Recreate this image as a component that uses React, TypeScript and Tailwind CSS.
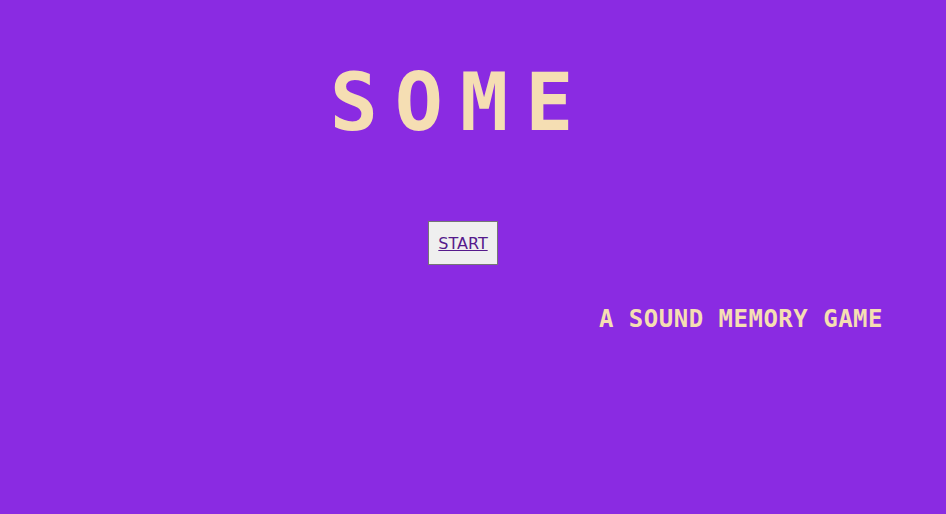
export default function App() {
  return (
    <div className="min-h-[514px] w-full bg-[#8a2be2] font-['DejaVu_Sans_Mono',monospace]">
      <div className="flex flex-col items-center pr-[20px] pt-[63px]">
        <h1 className="text-[80px] font-bold leading-[80px] tracking-[17px] pr-[6px] text-[#f5deb3]">SOME</h1>
        <a
          href="#"
          className="mt-[78px] flex h-[44px] w-[70px] items-center justify-center border border-[#767676] bg-[#efefef] pt-[2px] font-['DejaVu_Sans',sans-serif] text-[16px] text-[#551a8b] underline"
        >
          START
        </a>
      </div>
      <div className="flex justify-end pr-[63px] pt-[40px]">
        <p className="text-[24px] font-bold leading-[28px] tracking-[0.5px] text-[#f5deb3]">A SOUND MEMORY GAME</p>
      </div>
    </div>
  );
}
